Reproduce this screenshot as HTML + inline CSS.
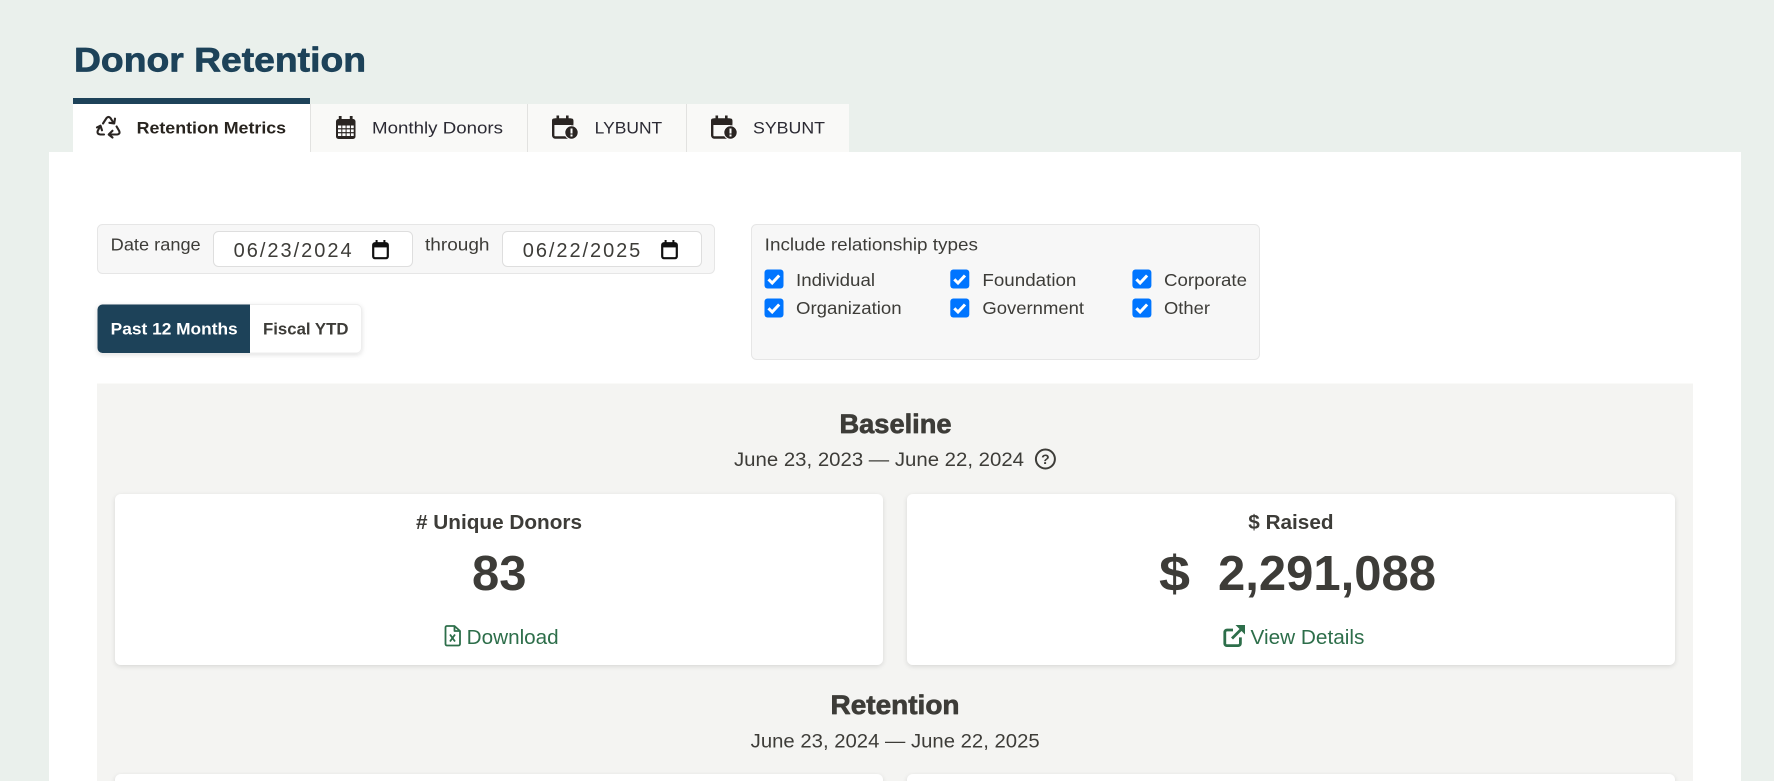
<!DOCTYPE html>
<html lang="en">
<head>
<meta charset="utf-8">
<title>Donor Retention</title>
<style>
html,body{margin:0;padding:0;width:1774px;height:781px;overflow:hidden;background:#eaf0ec}
svg{display:block}
text{font-family:"Liberation Sans",Arial,sans-serif;fill:#3d3c38}
.b{font-weight:700}
.h{stroke-width:.7px;stroke-linejoin:round}
</style>
</head>
<body>
<svg width="1774" height="781" viewBox="0 0 1774 781" xmlns="http://www.w3.org/2000/svg">
<defs>
<filter id="sh" x="-5%" y="-10%" width="110%" height="125%"><feDropShadow dx="0" dy="1.5" stdDeviation="2.5" flood-color="#000" flood-opacity=".12"/></filter>
<g id="chk"><rect x="0" y="0" width="19" height="19" rx="3" fill="#0075ff"/><path d="M4 9.8l3.700 3.700 7-7.500" fill="none" stroke="#fff" stroke-width="3"/></g>
<g id="cal"><rect x="1.200" y="3.200" width="14.600" height="15" rx="1.800" fill="none" stroke="#111" stroke-width="2.200"/><rect x="1" y="3" width="15" height="4.400" fill="#111"/><rect x="3.600" y="0" width="2" height="4" fill="#111"/><rect x="11.400" y="0" width="2" height="4" fill="#111"/></g>
<g id="calx"><rect x="1.200" y="4" width="19" height="18" rx="2" fill="none" stroke="#2a2522" stroke-width="2.400"/><rect x="0" y="3" width="21.400" height="6.500" rx="2" fill="#2a2522"/><rect x="4.500" y="0" width="2.600" height="4" fill="#2a2522"/><rect x="14" y="0" width="2.600" height="4" fill="#2a2522"/><circle cx="19.500" cy="17" r="7.200" fill="#fff"/><circle cx="19.500" cy="17" r="6.200" fill="#2a2522"/><rect x="18.500" y="13" width="2" height="5" fill="#fff"/><rect x="18.500" y="19" width="2" height="2" fill="#fff"/></g>
</defs>

<rect width="1774" height="781" fill="#eaf0ec"/>
<text x="74" y="71.500" font-size="34" class="b h" style="fill:#1d4259;stroke:#1d4259" textLength="292" lengthAdjust="spacingAndGlyphs">Donor Retention</text>

<!-- tabs -->
<rect x="311" y="104" width="538" height="48" fill="#f9f9f7"/>
<rect x="73" y="98" width="237" height="54" fill="#fff"/>
<rect x="73" y="98" width="237" height="6" fill="#1d4259"/>
<rect x="310" y="104" width="1" height="48" fill="#e2e2e0"/>
<rect x="527" y="104" width="1" height="48" fill="#e2e2e0"/>
<rect x="686" y="104" width="1" height="48" fill="#e2e2e0"/>

<!-- panel -->
<rect x="49" y="152" width="1692" height="629" fill="#fff"/>

<!-- tab icons -->
<g fill="none" stroke="#2a2522" stroke-width="2.100" stroke-linejoin="round" stroke-linecap="round">
<path d="M103 123.500l3.500-5.400q2-2.300 4 0l3 4.900"/><path d="M115 118.600l-.8 4.800-4.800-.6"/>
<path d="M116.600 126.500l2.600 4.500q1.200 3-2 3.500h-7.700"/><path d="M112.500 130.800l-3.800 3.700 3.800 3"/>
<path d="M104 134.500h-3.800q-3.500-.4-2.400-3.800l2.600-4.800"/><path d="M97 127.400l3.500-1.700 1.500 4.600"/>
</g>
<g>
<rect x="336" y="119" width="19.500" height="20" rx="2.500" fill="#2a2522"/>
<rect x="338.800" y="116" width="2.800" height="5" fill="#2a2522"/><rect x="349.800" y="116" width="2.800" height="5" fill="#2a2522"/>
<g fill="#fff">
<rect x="338" y="125.500" width="3.300" height="2.700"/><rect x="342.300" y="125.500" width="3.300" height="2.700"/><rect x="346.600" y="125.500" width="3.300" height="2.700"/><rect x="350.900" y="125.500" width="2.800" height="2.700"/>
<rect x="338" y="129.400" width="3.300" height="2.700"/><rect x="342.300" y="129.400" width="3.300" height="2.700"/><rect x="346.600" y="129.400" width="3.300" height="2.700"/><rect x="350.900" y="129.400" width="2.800" height="2.700"/>
<rect x="338" y="133.300" width="3.300" height="2.700"/><rect x="342.300" y="133.300" width="3.300" height="2.700"/><rect x="346.600" y="133.300" width="3.300" height="2.700"/><rect x="350.900" y="133.300" width="2.800" height="2.700"/>
</g>
</g>
<use href="#calx" x="552" y="115.500"/>
<use href="#calx" x="711" y="115.500"/>

<text x="136.600" y="133.500" font-size="16.500" class="b" style="fill:#28241f" textLength="149.500" lengthAdjust="spacingAndGlyphs">Retention Metrics</text>
<text x="372" y="133.500" font-size="16.500" style="fill:#2b2a33" textLength="131" lengthAdjust="spacingAndGlyphs">Monthly Donors</text>
<text x="594.700" y="133.500" font-size="16.500" style="fill:#2b2a33" textLength="67.500" lengthAdjust="spacingAndGlyphs">LYBUNT</text>
<text x="753" y="133.500" font-size="16.500" style="fill:#2b2a33" textLength="72" lengthAdjust="spacingAndGlyphs">SYBUNT</text>

<!-- date panel -->
<rect x="97.500" y="224.500" width="617" height="49" rx="5" fill="#f7f7f7" stroke="#e6e6e6"/>
<text x="110.700" y="250.700" font-size="17.600" textLength="90" lengthAdjust="spacingAndGlyphs">Date range</text>
<rect x="213.500" y="231.500" width="199" height="35" rx="5" fill="#fff" stroke="#dedede"/>
<text x="233.600" y="257" font-size="20" textLength="118" lengthAdjust="spacing">06/23/2024</text>
<use href="#cal" x="372" y="240"/>
<text x="425" y="250.700" font-size="17.600" textLength="64.500" lengthAdjust="spacingAndGlyphs">through</text>
<rect x="502.500" y="231.500" width="199" height="35" rx="5" fill="#fff" stroke="#dedede"/>
<text x="522.800" y="257" font-size="20" textLength="117.500" lengthAdjust="spacing">06/22/2025</text>
<use href="#cal" x="661" y="240"/>

<!-- button group -->
<rect x="97.500" y="304.500" width="264" height="48.500" rx="5" fill="#fff" stroke="#eee" filter="url(#sh)"/>
<path d="M250 304.500H102.500a5 5 0 0 0-5 5V348a5 5 0 0 0 5 5H250z" fill="#1d4259"/>
<text x="110.700" y="334.500" font-size="17" class="b" style="fill:#fff" textLength="127" lengthAdjust="spacingAndGlyphs">Past 12 Months</text>
<text x="263" y="334.500" font-size="17" class="b" textLength="85.500" lengthAdjust="spacingAndGlyphs">Fiscal YTD</text>

<!-- relationship panel -->
<rect x="751.500" y="224.500" width="508" height="135" rx="5" fill="#f7f7f7" stroke="#e6e6e6"/>
<text x="764.700" y="250.700" font-size="17.600" textLength="213.300" lengthAdjust="spacingAndGlyphs">Include relationship types</text>
<use href="#chk" x="764.500" y="269.500"/><use href="#chk" x="950.300" y="269.500"/><use href="#chk" x="1132.400" y="269.500"/>
<use href="#chk" x="764.500" y="298.500"/><use href="#chk" x="950.300" y="298.500"/><use href="#chk" x="1132.400" y="298.500"/>
<text x="796" y="286" font-size="17.600" textLength="79" lengthAdjust="spacingAndGlyphs">Individual</text>
<text x="982.400" y="286" font-size="17.600" textLength="94" lengthAdjust="spacingAndGlyphs">Foundation</text>
<text x="1164" y="286" font-size="17.600" textLength="83" lengthAdjust="spacingAndGlyphs">Corporate</text>
<text x="796" y="314" font-size="17.600" textLength="105.600" lengthAdjust="spacingAndGlyphs">Organization</text>
<text x="982.400" y="314" font-size="17.600" textLength="101.600" lengthAdjust="spacingAndGlyphs">Government</text>
<text x="1164" y="314" font-size="17.600" textLength="46" lengthAdjust="spacingAndGlyphs">Other</text>

<!-- gray section -->
<rect x="97" y="383.500" width="1596" height="398" fill="#f4f4f2"/>
<text x="839.500" y="433" font-size="26.500" class="b h" style="stroke:#3d3c38" textLength="112" lengthAdjust="spacingAndGlyphs">Baseline</text>
<text x="734" y="466" font-size="19.500" textLength="290" lengthAdjust="spacingAndGlyphs">June 23, 2023 — June 22, 2024</text>
<circle cx="1045.400" cy="459" r="9.500" fill="none" stroke="#3d3c38" stroke-width="2"/>
<text x="1045.400" y="464.200" font-size="14" class="b" text-anchor="middle">?</text>

<rect x="115" y="494" width="768" height="171" rx="6" fill="#fff" filter="url(#sh)"/>
<rect x="907" y="494" width="768" height="171" rx="6" fill="#fff" filter="url(#sh)"/>

<text x="416" y="529" font-size="20" class="b" textLength="166" lengthAdjust="spacingAndGlyphs"># Unique Donors</text>
<text x="472" y="590" font-size="49" class="b" textLength="54.500" lengthAdjust="spacingAndGlyphs">83</text>
<g fill="none" stroke="#2d6e4a" stroke-width="1.800" stroke-linejoin="round">
<path d="M445.500 627.500a1.500 1.500 0 0 1 1.500-1.500h7.500l5.500 5v13a1.500 1.500 0 0 1-1.500 1.500h-11.500a1.500 1.500 0 0 1-1.500-1.500z"/>
<path d="M454.500 626v5h5.500"/>
<path d="M450 634.500l5 7m0-7l-5 7"/>
</g>
<text x="466.700" y="644" font-size="20" style="fill:#2d6e4a" textLength="92" lengthAdjust="spacingAndGlyphs">Download</text>

<text x="1248.300" y="529" font-size="20" class="b" textLength="85.200" lengthAdjust="spacingAndGlyphs">$ Raised</text>
<text x="1159" y="591" font-size="50" class="b" textLength="31" lengthAdjust="spacingAndGlyphs">$</text>
<text x="1218" y="590" font-size="49" class="b" textLength="218" lengthAdjust="spacingAndGlyphs">2,291,088</text>
<g fill="none" stroke="#2d6e4a" stroke-width="2.800">
<path d="M1233 630h-6a2.200 2.200 0 0 0-2.200 2.200v11.400a2 2 0 0 0 2 2h11.400a2.200 2.200 0 0 0 2.200-2.200v-6"/>
<path d="M1232 638.500l9-9"/>
</g>
<path d="M1235.500 625h9.500v9.500z" fill="#2d6e4a"/>
<text x="1250.500" y="644" font-size="20" style="fill:#2d6e4a" textLength="113.900" lengthAdjust="spacingAndGlyphs">View Details</text>

<text x="830.500" y="714" font-size="26.500" class="b h" style="stroke:#3d3c38" textLength="129" lengthAdjust="spacingAndGlyphs">Retention</text>
<text x="750.700" y="747.700" font-size="19.500" textLength="289" lengthAdjust="spacingAndGlyphs">June 23, 2024 — June 22, 2025</text>

<rect x="115" y="774" width="768" height="20" rx="6" fill="#fff" filter="url(#sh)"/>
<rect x="907" y="774" width="768" height="20" rx="6" fill="#fff" filter="url(#sh)"/>
</svg>
</body>
</html>
